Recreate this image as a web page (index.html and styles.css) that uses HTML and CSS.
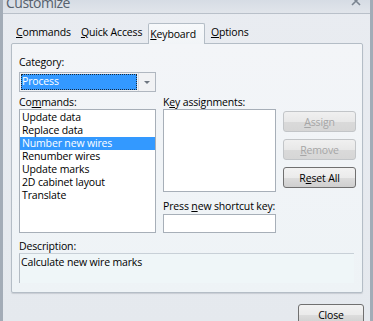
FILE: index.html
```html
<!DOCTYPE html>
<html lang="en">
<head>
    <meta charset="UTF-8">
    <title>Customize</title>
    <link rel="stylesheet" href="styles.css">
</head>
<body>
    <div class="window">
        <div class="titlebar">
            <span class="title">Customize</span>
            <svg class="close-x" width="10" height="10" viewBox="0 0 10 10">
                <path d="M1 1 L9 9 M9 1 L1 9" stroke="#7a8490" stroke-width="1.6" fill="none"/>
            </svg>
        </div>

        <div class="tabs">
            <span class="tab"><u>C</u>ommands</span>
            <span class="tab"><u>Q</u>uick Access</span>
            <span class="tab active"><u>K</u>eyboard</span>
            <span class="tab"><u>O</u>ptions</span>
        </div>

        <div class="panel">
            <div class="label">Cate<u>g</u>ory:</div>
            <div class="combo">
                <div class="combo-value"><span>Process</span></div>
                <div class="combo-arrow"><span class="tri"></span></div>
            </div>

            <div class="main">
                <div class="col">
                    <div class="label">Co<u>m</u>mands:</div>
                    <ul class="list commands">
                        <li>Update data</li>
                        <li>Replace data</li>
                        <li class="selected">Number new wires</li>
                        <li>Renumber wires</li>
                        <li>Update marks</li>
                        <li>2D cabinet layout</li>
                        <li>Translate</li>
                    </ul>
                </div>
                <div class="col">
                    <div class="label">K<u>e</u>y assignments:</div>
                    <div class="list keys"></div>
                    <div class="label shortcut-label">Press <u>n</u>ew shortcut key:</div>
                    <div class="textbox"></div>
                </div>
                <div class="col buttons">
                    <button class="btn" disabled><u>A</u>ssign</button>
                    <button class="btn" disabled><u>R</u>emove</button>
                    <button class="btn">R<u>e</u>set All</button>
                </div>
            </div>

            <div class="label desc-label">Description:</div>
            <div class="description">Calculate new wire marks</div>
        </div>

        <div class="footer">
            <button class="btn close">Close</button>
        </div>
    </div>
</body>
</html>
```

FILE: styles.css
```css
body {
    margin: 0;
    font-family: "Open Sans", sans-serif;
    font-size: 10.5px;
    letter-spacing: -0.15px;
    color: #000;
    background: #e8ebf0;
}

.window {
    width: 373px;
    height: 321px;
    box-sizing: border-box;
    border-left: 3px solid #a3acb7;
    border-right: 3px solid #a3acb7;
    background: linear-gradient(#e9ecf1, #e5e9ee);
    display: flex;
    flex-direction: column;
    overflow: hidden;
}

.titlebar {
    height: 14px;
    flex: none;
    box-sizing: border-box;
    border-bottom: 1px solid #b9c0c9;
    background: linear-gradient(#d6dce4, #e1e5eb);
    display: flex;
    justify-content: space-between;
    overflow: hidden;
    padding: 0 9px 0 3px;
}

.title {
    font-size: 14px;
    line-height: 15px;
    letter-spacing: -0.5px;
    margin-top: -5px;
    color: #56616d;
}

.close-x {
    margin-top: -4px;
}

.tabs {
    height: 29px;
    flex: none;
    display: flex;
    align-items: flex-end;
    margin-left: 8px;
}

.tab {
    height: 20px;
    line-height: 18px;
    padding: 0 5px;
    box-sizing: border-box;
}

.tab.active {
    height: 21px;
    margin: 0 1px -1px 1px;
    padding: 1px 8px 0 1px;
    border: 1px solid #b4bdc6;
    border-bottom: none;
    border-radius: 2px 2px 0 0;
    background: linear-gradient(#f7f9fb, #f1f4f7);
    position: relative;
    z-index: 1;
}

.panel {
    flex: none;
    width: 352px;
    height: 250px;
    box-sizing: border-box;
    margin-left: 8px;
    border: 1px solid #b4bdc6;
    border-radius: 2px;
    box-shadow: 0 1px 1px #c8cdd3;
    background: linear-gradient(#f3f5f8, #eef3f6);
    padding: 11px 8px 0 7px;
}

.label {
    line-height: 14px;
    height: 14px;
    white-space: nowrap;
}

.combo {
    margin-top: 3px;
    width: 137px;
    height: 20px;
    box-sizing: border-box;
    border: 1px solid #b0b7c0;
    background: #f1f2f4;
    display: flex;
}

.combo-value {
    width: 118px;
    padding: 1px;
    box-sizing: border-box;
}

.combo-value span {
    display: block;
    height: 16px;
    line-height: 15px;
    box-sizing: border-box;
    background: #3399ff;
    color: #fff;
    padding-left: 1px;
    outline: 1px dotted #1a2a3a;
    outline-offset: -1px;
}

.combo-arrow {
    flex: 1;
    border-left: 1px solid #dadde2;
    display: flex;
    align-items: center;
    justify-content: center;
}

.tri {
    width: 0;
    height: 0;
    border-left: 3px solid transparent;
    border-right: 3px solid transparent;
    border-top: 3px solid #6e7680;
}

.main {
    margin-top: 3px;
    display: grid;
    grid-template-columns: 137px 113px 73px;
    column-gap: 7px;
}

.col {
    display: flex;
    flex-direction: column;
}

.list {
    margin: 0;
    padding: 1px 0 0;
    list-style: none;
    background: #fff;
    border: 1px solid #a7afb8;
    box-sizing: border-box;
}

.commands {
    height: 124px;
}

.commands li {
    height: 13px;
    line-height: 13px;
    padding-left: 2px;
    white-space: nowrap;
}

.commands li.selected {
    background: #3399ff;
    color: #fff;
}

.keys {
    height: 83px;
}

.shortcut-label {
    margin-top: 7px;
}

.textbox {
    margin-top: 1px;
    height: 19px;
    background: #fff;
    border: 1px solid #a7afb8;
    box-sizing: border-box;
}

.buttons {
    padding-top: 16px;
    gap: 7px;
}

.btn {
    font-family: "Open Sans", sans-serif;
    font-size: 10.5px;
    letter-spacing: -0.15px;
    height: 21px;
    padding: 0;
    box-sizing: border-box;
    border: 1px solid #707070;
    border-radius: 3px;
    color: #000;
    background: linear-gradient(#f2f2f2 0%, #ebebeb 50%, #dddddd 51%, #cfcfcf 100%);
}

.btn:disabled {
    color: #a6a6a6;
    border-color: #c2c5c8;
    background: linear-gradient(#f0f0f0 0%, #e8e8e8 50%, #dadada 51%, #d6d6d6 100%);
}

.desc-label {
    margin-top: 6px;
}

.description {
    width: 335px;
    height: 30px;
    box-sizing: border-box;
    border-top: 1px solid #c8d0d7;
    border-left: 1px solid #b3bbc3;
    background: #eff6f8;
    line-height: 14px;
    padding: 1px 0 0 1px;
}

.footer {
    display: flex;
    justify-content: flex-end;
    padding: 11px 6px 0 0;
}

.close {
    width: 66px;
}
```
